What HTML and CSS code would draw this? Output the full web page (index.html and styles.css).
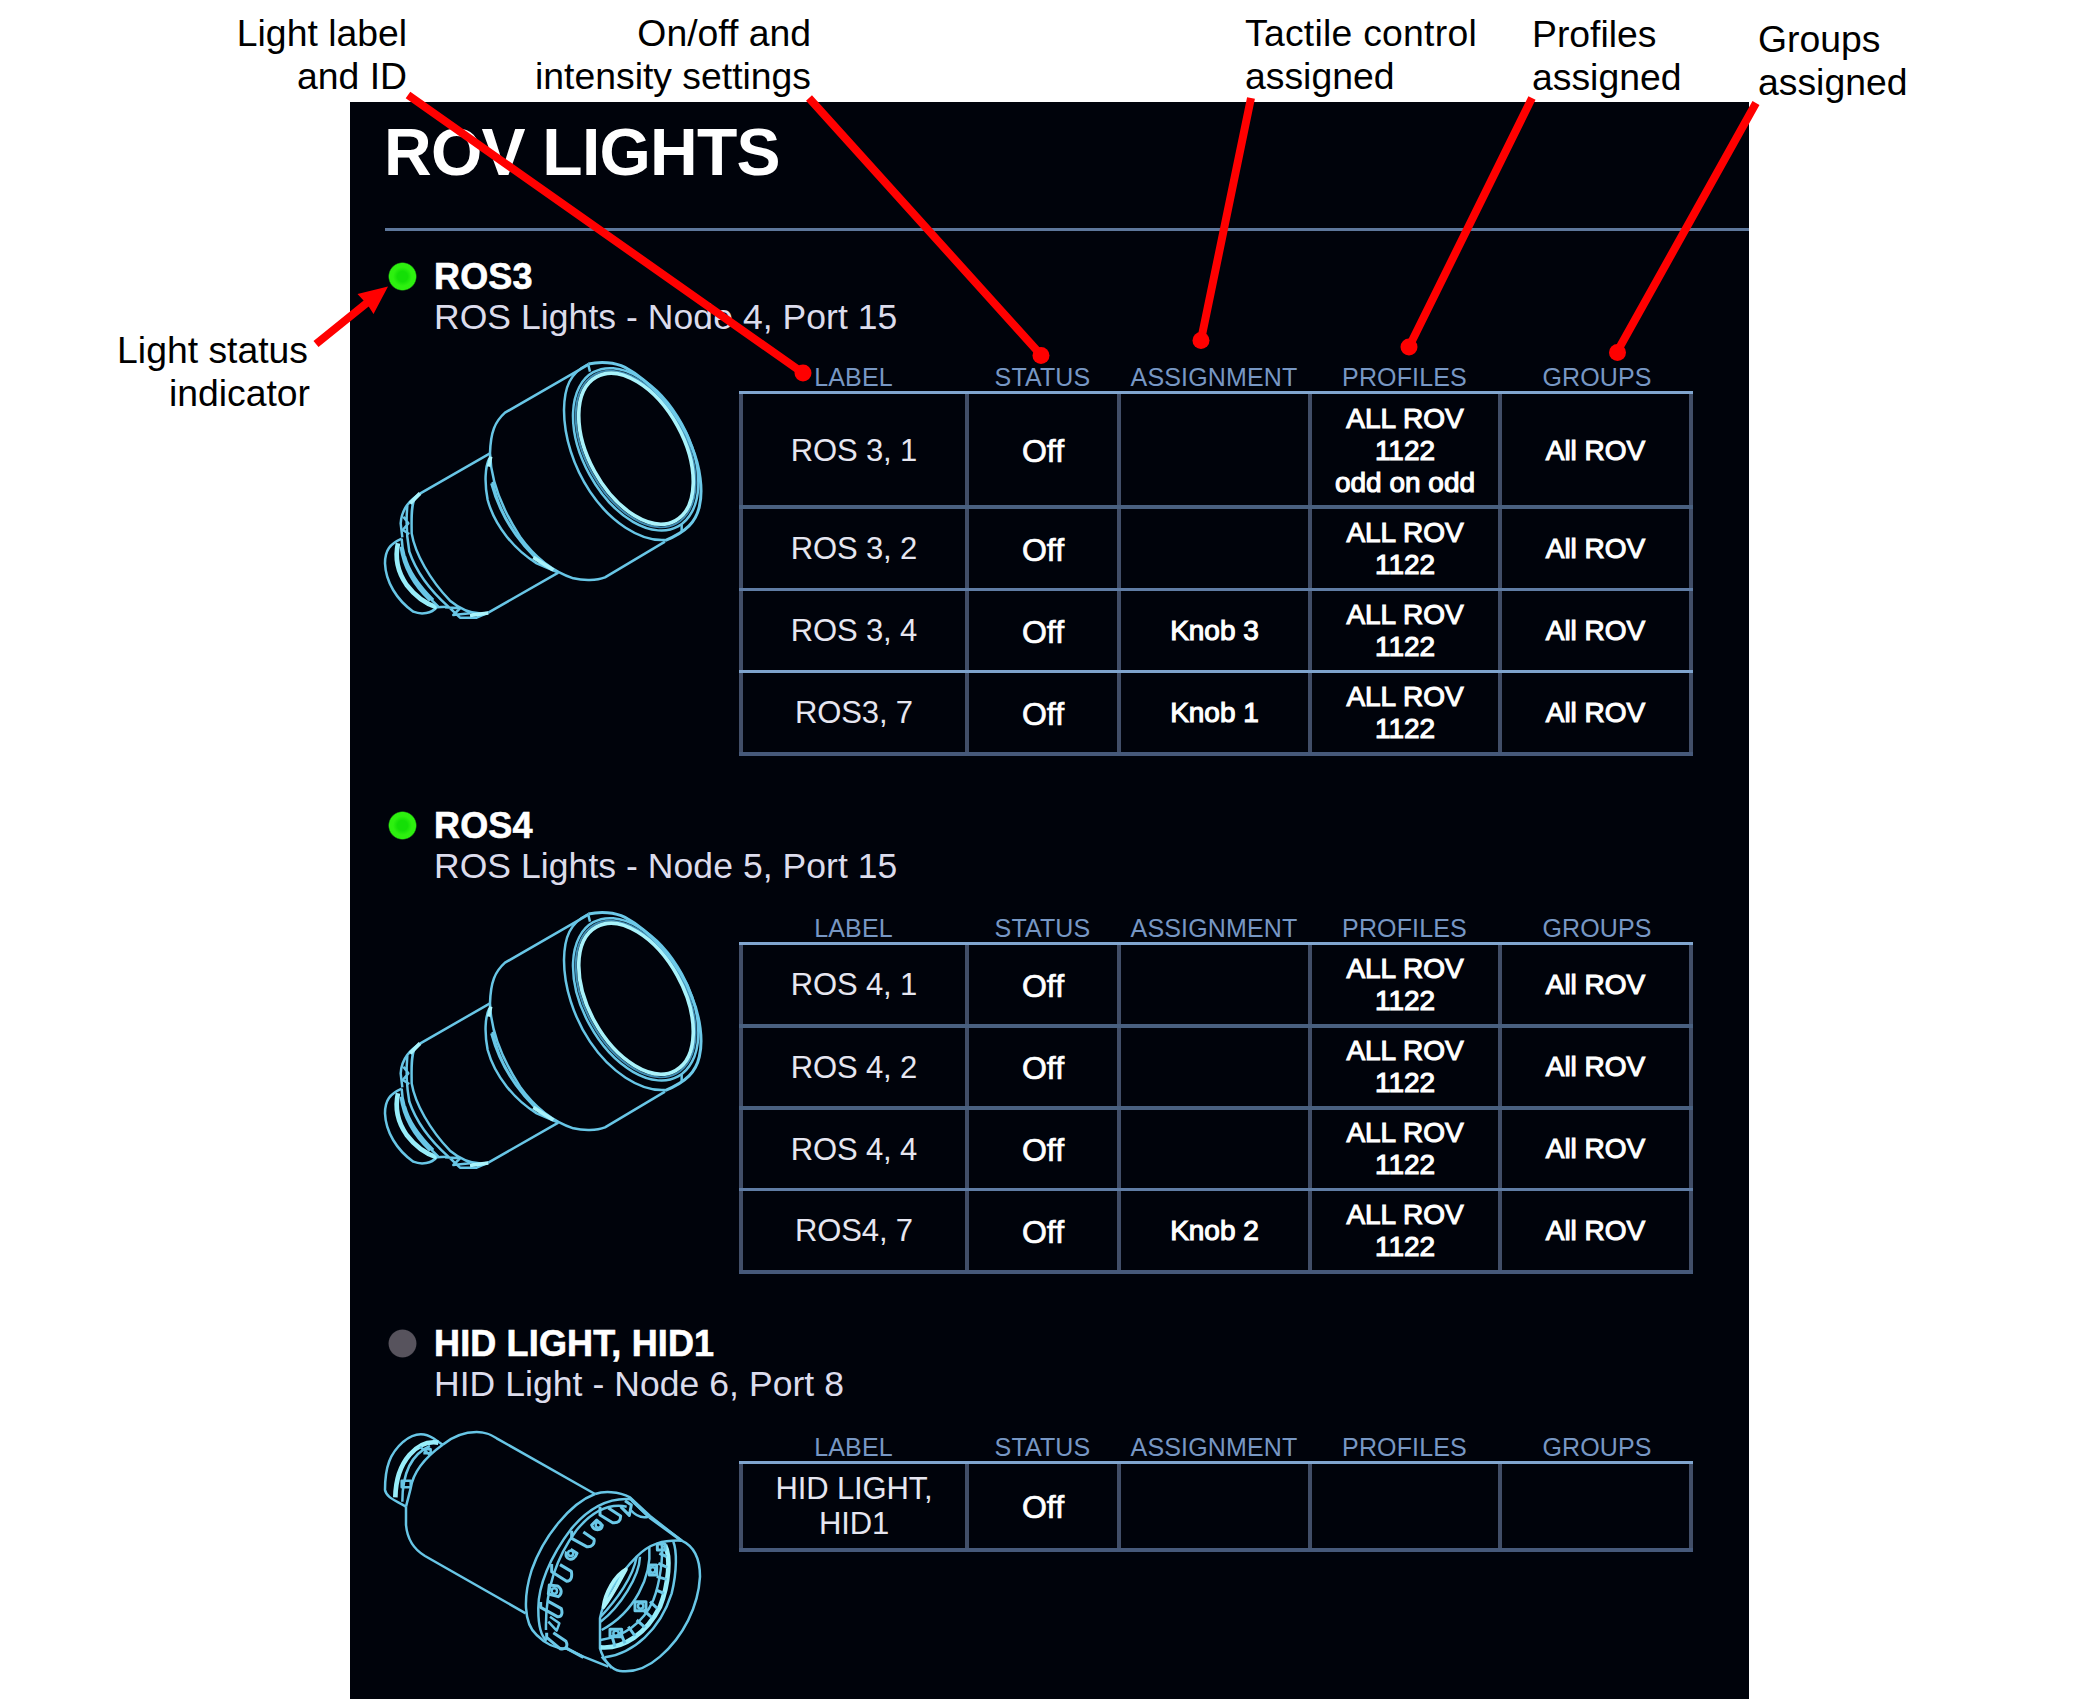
FILE: index.html
```html
<!DOCTYPE html>
<html lang="en">
<head>
<meta charset="utf-8">
<title>ROV Lights</title>
<link rel="stylesheet" href="styles.css">
</head>
<body>
<svg class="defs" width="0" height="0" aria-hidden="true">
  <symbol id="ros-light" viewBox="0 0 1050 840">
    <g class="art">
      <ellipse class="fine" cx="797" cy="297" rx="255" ry="150" transform="rotate(61.2 797 297)"/>
      <ellipse cx="797" cy="298" rx="264" ry="158" transform="rotate(61.2 797 298)"/>
      <ellipse class="bright" cx="798" cy="296" rx="246" ry="142" transform="rotate(61.2 798 296)"/>
      <path class="mid" d="M655 42C690 34 735 36 765 52C840 92 930 190 965 290C990 350 1000 420 988 470C978 515 950 545 885 572"/>
      <path d="M655 42C600 70 583 110 582 180C582 260 610 350 660 425C720 515 810 575 885 570M655 45L660 65M935 525V545"/>
      <path d="M655 44L405 188C375 215 362 245 360 310C362 390 395 475 450 560C500 630 560 668 610 685C640 692 680 692 705 682L885 575"/>
      <path d="M358 325C345 350 343 400 353 450C375 530 435 600 500 640L565 668M368 395C385 480 430 560 510 635M364 400C388 490 440 575 520 645"/>
      <path class="bright" d="M362 320L356 350M490 622L550 660"/>
      <path d="M360 310L155 428C120 450 95 475 92 520L97 562M565 668L355 788"/>
      <path d="M135 445C122 465 125 510 125 550C135 610 180 690 240 752C280 785 320 795 355 788M112 468C108 510 108 550 118 605C140 670 190 730 235 770L270 803H320L355 788M100 500L115 520L98 540L118 552M225 772L270 775L250 795L300 790"/>
      <path class="bright" d="M150 430L120 460M300 796L355 789"/>
      <path d="M95 566C60 582 45 600 45 640C47 695 80 750 130 785C155 795 185 790 200 772L230 770"/>
      <path class="heavy" d="M84 580C75 620 82 665 110 705C135 738 165 760 200 772"/>
      <path d="M95 566C98 640 135 705 205 770M105 620C118 670 150 710 190 750M92 590C100 650 130 705 180 752"/>
    </g>
  </symbol>
  <symbol id="hid-light" viewBox="0 0 1050 870">
    <g class="art">
      <path d="M218 104L190 85C160 65 130 70 100 95C60 130 45 170 45 240C50 265 80 272 108 290"/>
      <path class="heavy" d="M205 98C145 88 78 150 76 262"/>
      <path d="M180 108C130 130 97 180 97 275M218 104C175 135 130 180 122 235L108 290M150 110L180 135M95 212H122V232H95ZM160 118H182V130H160"/>
      <path d="M218 104C250 78 285 66 320 66C350 66 365 75 380 85L675 252M108 290V345C112 390 135 420 165 438L467 610"/>
      <path d="M675 252C700 243 745 243 780 262L840 318L935 392"/>
      <path class="mid" d="M780 265L835 318M838 322L935 392"/>
      <path d="M675 252C600 280 520 380 485 480C460 560 460 640 500 675C525 700 550 715 590 716L640 740L715 770"/>
      <path d="M785 268C720 262 660 290 605 355C540 440 503 530 505 600C505 650 515 680 530 692M770 290C720 280 670 300 620 360C560 440 525 540 528 660"/>
      <path class="mid" d="M690 290V315L728 338C745 340 752 332 752 318L715 294M605 362V385L650 410C665 412 675 402 672 388L640 366M545 462V485L590 514C604 514 607 500 604 484L570 464M512 576V592L562 620C576 622 578 608 574 596L535 574M530 668V682L570 716C590 720 594 706 588 694L550 668M752 290L778 316L784 285L765 272"/>
      <path d="M785 272L835 320C815 325 795 315 782 300M535 635L560 662L568 640L540 620"/>
      <path class="mid" d="M665 345C672 365 695 362 697 346L680 330ZM590 425C580 450 612 458 621 430L602 418M538 525L535 552L565 560C578 550 575 535 563 528Z"/>
      <circle cx="685" cy="345" r="8"/><circle cx="602" cy="430" r="8"/><circle cx="553" cy="543" r="8"/>
      <path class="mid" d="M585 712L640 742"/>
      <path d="M935 392C975 410 990 450 990 500C985 590 940 680 870 740C830 775 790 788 750 783C725 780 700 750 690 715V625C700 570 740 500 800 440C840 400 880 390 935 392M695 740L725 774"/>
      <path d="M910 395C920 420 922 480 905 550C870 660 790 730 705 742"/>
      <path class="heavy" d="M885 405C903 440 897 520 870 590C830 670 760 718 692 712"/>
      <path d="M838 412C845 500 795 605 695 660M810 440C808 500 750 590 692 635M800 440C790 500 740 570 692 620M875 400C880 440 870 520 850 570C820 640 760 680 692 690"/>
      <path class="mid" d="M868 430L890 440M865 460L892 472M860 500L890 508M858 540L882 550M840 575L862 595M820 600L845 622M800 630L825 652M775 650L795 678M750 665L765 700M725 675L735 710"/>
      <path class="bright" d="M768 478C735 495 705 550 700 592C725 560 745 520 768 478Z"/>
      <path class="mid" d="M838 465H860V495H838ZM795 575H828V602H795ZM720 658H755V680H720ZM862 402H885V420H862Z"/>
      <circle cx="848" cy="480" r="8"/><circle cx="812" cy="588" r="8"/><circle cx="738" cy="670" r="8"/>
    </g>
  </symbol>
</svg>

<main class="panel">
  <header class="panel-header"><h1>ROV LIGHTS</h1></header>

  <section class="unit unit-first">
    <div class="unit-title"><span class="lamp on"></span><h2>ROS3</h2></div>
    <p class="unit-info">ROS Lights - Node 4, Port 15</p>
    <div class="unit-body">
      <svg class="figure"><use href="#ros-light"/></svg>
      <div class="table">
        <div class="head"><span>LABEL</span><span>STATUS</span><span>ASSIGNMENT</span><span>PROFILES</span><span>GROUPS</span></div>
        <div class="row first tall"><div class="label">ROS 3, 1</div><div class="status">Off</div><div></div><div>ALL ROV<br>1122<br>odd on odd</div><div>All ROV</div></div>
        <div class="row dim"><div class="label">ROS 3, 2</div><div class="status">Off</div><div></div><div>ALL ROV<br>1122</div><div>All ROV</div></div>
        <div class="row"><div class="label">ROS 3, 4</div><div class="status">Off</div><div>Knob 3</div><div>ALL ROV<br>1122</div><div>All ROV</div></div>
        <div class="row lit"><div class="label">ROS3, 7</div><div class="status">Off</div><div>Knob 1</div><div>ALL ROV<br>1122</div><div>All ROV</div></div>
      </div>
    </div>
  </section>

  <section class="unit unit-second">
    <div class="unit-title"><span class="lamp on"></span><h2>ROS4</h2></div>
    <p class="unit-info">ROS Lights - Node 5, Port 15</p>
    <div class="unit-body">
      <svg class="figure"><use href="#ros-light"/></svg>
      <div class="table">
        <div class="head"><span>LABEL</span><span>STATUS</span><span>ASSIGNMENT</span><span>PROFILES</span><span>GROUPS</span></div>
        <div class="row first"><div class="label">ROS 4, 1</div><div class="status">Off</div><div></div><div>ALL ROV<br>1122</div><div>All ROV</div></div>
        <div class="row dim"><div class="label">ROS 4, 2</div><div class="status">Off</div><div></div><div>ALL ROV<br>1122</div><div>All ROV</div></div>
        <div class="row dim"><div class="label">ROS 4, 4</div><div class="status">Off</div><div></div><div>ALL ROV<br>1122</div><div>All ROV</div></div>
        <div class="row"><div class="label">ROS4, 7</div><div class="status">Off</div><div>Knob 2</div><div>ALL ROV<br>1122</div><div>All ROV</div></div>
      </div>
    </div>
  </section>

  <section class="unit unit-third">
    <div class="unit-title"><span class="lamp"></span><h2>HID LIGHT, HID1</h2></div>
    <p class="unit-info">HID Light - Node 6, Port 8</p>
    <div class="unit-body">
      <svg class="figure figure-hid"><use href="#hid-light"/></svg>
      <div class="table">
        <div class="head"><span>LABEL</span><span>STATUS</span><span>ASSIGNMENT</span><span>PROFILES</span><span>GROUPS</span></div>
        <div class="row first double"><div class="label">HID LIGHT,<br>HID1</div><div class="status">Off</div><div></div><div></div><div></div></div>
      </div>
    </div>
  </section>
</main>

<svg class="pointers" viewBox="0 0 2100 1700" aria-hidden="true">
  <path class="leader" d="M408 95L803 373M809 98L1041 355M1251 98L1201 340M1532 98L1409 347M1756 103L1617 352M316 344L368 302"/>
  <circle cx="803" cy="373" r="8.5"/>
  <circle cx="1041" cy="355.5" r="8.5"/>
  <circle cx="1201" cy="340.5" r="8.5"/>
  <circle cx="1409" cy="347" r="8.5"/>
  <circle cx="1617.5" cy="352.5" r="8.5"/>
  <path d="M388 286.500L357.500 294L364 301L369 307L373.500 314Z"/>
</svg>
<div class="note right note-label">Light label<br>and ID</div>
<div class="note right note-onoff">On/off and<br>intensity settings</div>
<div class="note note-tactile"><span class="wide">Tactile control</span><br>assigned</div>
<div class="note note-profiles">Profiles<br>assigned</div>
<div class="note note-groups">Groups<br>assigned</div>
<div class="note right note-status">Light status<br><span class="nudge">indicator</span></div>
</body>
</html>
```
FILE: styles.css
```css
* { box-sizing: border-box; }

body {
  margin: 0;
  width: 2100px;
  height: 1700px;
  position: relative;
  overflow: hidden;
  background: #fff;
  padding: 102px 0 0 350px;
  font-family: "Liberation Sans", Arial, sans-serif;
}

h1, h2, p { margin: 0; font-weight: inherit; }
.defs { position: absolute; }

.panel {
  width: 1399px;
  height: 1597px;
  background: #00030b;
  color: #fff;
}

.panel-header {
  height: 129px;
  margin-left: 35px;
  padding-top: 13px;
  border-bottom: 3px solid #5d779b;
}
.panel-header h1 {
  margin-left: -1px;
  font-size: 66px;
  line-height: 74px;
  font-weight: bold;
  letter-spacing: -0.75px;
}

.unit-first { height: 574px; padding-top: 25px; }
.unit-second { height: 518px; }

.unit-title { display: flex; align-items: center; height: 41px; padding-left: 38px; gap: 17px; }
.unit-title h2 {
  font-size: 36px;
  line-height: 41px;
  font-weight: bold;
  letter-spacing: 0.15px;
  -webkit-text-stroke: 0.6px #fff;
}
.lamp {
  width: 29px;
  height: 29px;
  border-radius: 50%;
  background: radial-gradient(circle closest-side, #57535d 92%, #57535d00 100%);
}
.lamp.on { background: radial-gradient(circle closest-side, #14df06 0 35%, #2df00f 65% 90%, #24d80c00 100%); }
.unit-info {
  padding-left: 84px;
  font-size: 35.5px;
  line-height: 41px;
  letter-spacing: 0.06px;
  color: #dcdcec;
}

.unit-body { display: flex; align-items: flex-start; padding-left: 20px; gap: 19px; }
.figure { width: 350px; height: 280px; margin-top: 12px; }
.unit-second .figure { margin-top: 13px; }
.figure-hid { height: 290px; margin-top: 5px; }

.art { fill: none; stroke: #68c6e6; stroke-width: 7.5; stroke-linejoin: round; }
.art .fine { stroke: #3f8db4; stroke-width: 6; }
.art .mid { stroke-width: 9; stroke: #6cc9e8; }
.art .bright { stroke: #a9f3fb; stroke-width: 11; }
.art .heavy { stroke: #98eefa; stroke-width: 14; }

.table {
  width: 954px;
  margin-top: 23px;
  border-bottom: 4px solid #46597a;
}
.unit-second .table { margin-top: 25px; }
.unit-third .table { margin-top: 26px; }

.head, .row { display: grid; grid-template-columns: 226px 152px 191px 190px 195px; }
.head {
  height: 30px;
  line-height: 32px;
  font-size: 25px;
  letter-spacing: 0.15px;
  text-align: center;
  color: #7797c4;
}
.head span { padding-left: 3px; }
.row { height: 82px; border-top: 3px solid #5f7ca4; }
.row.first { border-top-color: #80a5cf; }
.row.dim { height: 83px; border-top: 4px solid #496080; }
.unit-second .row.dim { height: 82px; }
.row.lit { border-top-color: #7ea3cd; }
.row.tall { height: 114px; }
.row.double { height: 87px; }

.row > div {
  display: flex;
  align-items: center;
  justify-content: center;
  text-align: center;
  border-left: 4px solid #414e68;
  font-size: 28px;
  line-height: 32px;
  -webkit-text-stroke: 1.1px #fff;
}
.row.tall > div { padding-top: 2px; }
.row > div:last-child { border-right: 4px solid #414e68; }
.row > .label {
  font-size: 31px;
  line-height: 35px;
  letter-spacing: -0.15px;
  color: #e6e6f0;
  -webkit-text-stroke: 0;
}
.row > .status { font-size: 32px; padding-top: 2px; -webkit-text-stroke-width: 0.7px; }

.pointers { position: absolute; left: 0; top: 0; width: 2100px; height: 1700px; fill: #f00; }
.leader { fill: none; stroke: #f00; stroke-width: 8; }

.note {
  position: absolute;
  font-size: 37.33px;
  line-height: 43.3px;
  color: #000;
  white-space: nowrap;
}
.right { text-align: right; }
.note-label { right: 1693px; top: 12px; }
.note-onoff { right: 1289px; top: 12px; }
.note-tactile { left: 1245px; top: 12px; }
.wide { letter-spacing: 0.25px; }
.note-profiles { left: 1532px; top: 13px; }
.note-groups { left: 1758px; top: 18px; }
.note-status { right: 1792px; top: 329px; }
.nudge { margin-right: -2px; }
```
